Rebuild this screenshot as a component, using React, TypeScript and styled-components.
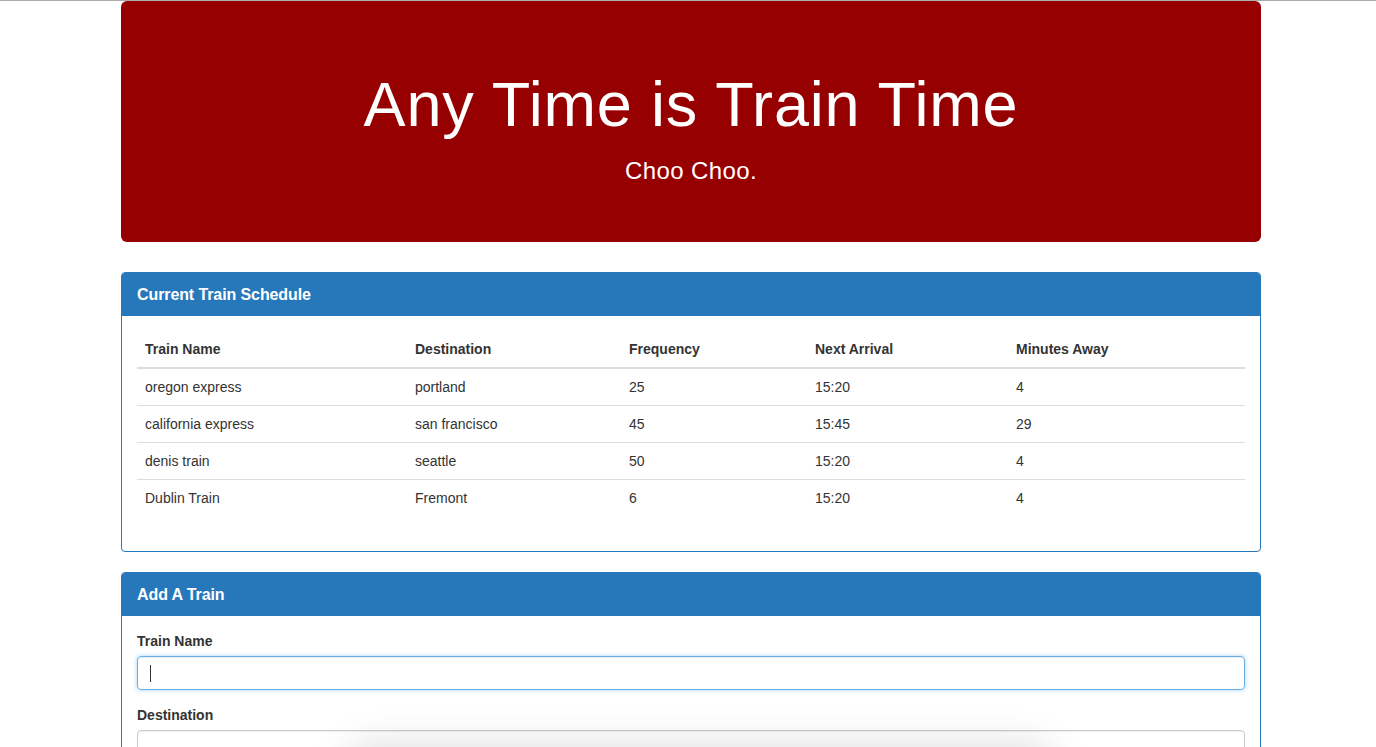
import React from 'react';
import styled, { createGlobalStyle } from 'styled-components';

const GlobalStyle = createGlobalStyle`
  html, body {
    margin: 0;
    padding: 0;
    background: #fff;
    overflow: hidden;
  }
  body {
    border-top: 1px solid #acacac;
    font-family: "Liberation Sans", Arial, Helvetica, sans-serif;
    font-size: 14px;
    line-height: 1.42857;
    color: #333;
  }
  * {
    box-sizing: border-box;
  }
`;

const Container = styled.div`
  width: 1140px;
  margin-left: 121px;
`;

const Jumbotron = styled.div`
  background: #960000;
  color: #fff;
  border-radius: 6px;
  padding: 48px 60px;
  margin-bottom: 30px;
  text-align: center;
`;

const Title = styled.h1`
  margin: 21px 0 17px;
  font-size: 63px;
  font-weight: 400;
  line-height: 1.1;
  letter-spacing: 0.8px;
`;

const Lead = styled.p`
  margin: 0 0 8px;
  font-size: 24px;
  line-height: 30px;
  letter-spacing: 0.4px;
`;

const Panel = styled.div`
  border: 1px solid #2678bb;
  border-radius: 4px;
  margin-bottom: 20px;
  background: #fff;
  overflow: hidden;
`;

const PanelHeading = styled.div`
  background: #2678bb;
  color: #fff;
  padding: 1px 15px 0;
  height: 43px;
  display: flex;
  align-items: center;
`;

const PanelTitle = styled.h3`
  margin: 0;
  font-size: 16px;
  font-weight: 700;
  letter-spacing: -0.1px;
`;

const PanelBody = styled.div`
  padding: 15px;
`;

const Table = styled.table`
  width: 100%;
  border-collapse: collapse;
  margin-bottom: 20px;
  table-layout: fixed;
`;

const Th = styled.th<{ $w: number }>`
  width: ${({ $w }) => $w}px;
  text-align: left;
  font-weight: 700;
  padding: 8px;
  line-height: 20px;
  border-bottom: 2px solid #ddd;
`;

const Td = styled.td`
  padding: 8px;
  line-height: 20px;
  border-top: 1px solid #ddd;
`;

const Row = styled.tr`
  &:first-child td {
    border-top: 0;
  }
`;

const FormGroup = styled.div`
  margin-bottom: 15px;
`;

const Label = styled.label`
  display: block;
  font-weight: 700;
  margin-bottom: 5px;
  line-height: 20px;
`;

const Input = styled.div<{ $focus?: boolean }>`
  height: 34px;
  border: 1px solid ${({ $focus }) => ($focus ? '#66afe9' : '#ccc')};
  border-radius: 4px;
  box-shadow: ${({ $focus }) =>
    $focus
      ? 'inset 0 1px 1px rgba(0,0,0,.075), 0 0 4px rgba(102,175,233,.6)'
      : 'inset 0 1px 1px rgba(0,0,0,.075)'};
  padding: 7px 12px;
  display: flex;
  align-items: center;
`;

const Caret = styled.span`
  width: 1px;
  height: 17px;
  background: #333;
`;

const BottomShade = styled.div`
  position: fixed;
  left: 360px;
  width: 680px;
  top: 760px;
  height: 40px;
  border-radius: 12px;
  box-shadow: 0 0 40px 14px rgba(0, 0, 0, 0.14);
`;

const columns = [
  { label: 'Train Name', w: 270 },
  { label: 'Destination', w: 214 },
  { label: 'Frequency', w: 186 },
  { label: 'Next Arrival', w: 201 },
  { label: 'Minutes Away', w: 237 },
];

const trains = [
  ['oregon express', 'portland', '25', '15:20', '4'],
  ['california express', 'san francisco', '45', '15:45', '29'],
  ['denis train', 'seattle', '50', '15:20', '4'],
  ['Dublin Train', 'Fremont', '6', '15:20', '4'],
];

export default function App() {
  return (
    <>
      <GlobalStyle />
      <Container>
        <Jumbotron>
          <Title>Any Time is Train Time</Title>
          <Lead>Choo Choo.</Lead>
        </Jumbotron>

        <Panel>
          <PanelHeading>
            <PanelTitle>Current Train Schedule</PanelTitle>
          </PanelHeading>
          <PanelBody>
            <Table>
              <thead>
                <tr>
                  {columns.map((c) => (
                    <Th key={c.label} $w={c.w}>
                      {c.label}
                    </Th>
                  ))}
                </tr>
              </thead>
              <tbody>
                {trains.map((t, i) => (
                  <Row key={i}>
                    {t.map((cell, j) => (
                      <Td key={j}>{cell}</Td>
                    ))}
                  </Row>
                ))}
              </tbody>
            </Table>
          </PanelBody>
        </Panel>

        <Panel>
          <PanelHeading>
            <PanelTitle>Add A Train</PanelTitle>
          </PanelHeading>
          <PanelBody>
            <FormGroup>
              <Label>Train Name</Label>
              <Input $focus>
                <Caret />
              </Input>
            </FormGroup>
            <FormGroup>
              <Label>Destination</Label>
              <Input />
            </FormGroup>
          </PanelBody>
        </Panel>
      </Container>
      <BottomShade />
    </>
  );
}
